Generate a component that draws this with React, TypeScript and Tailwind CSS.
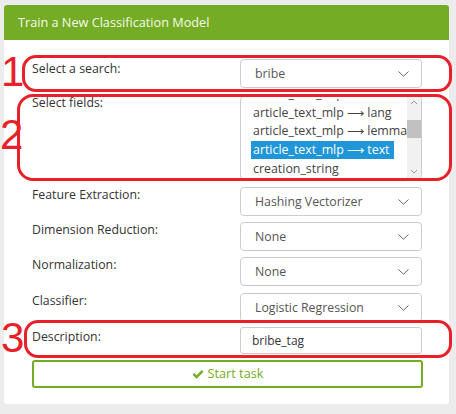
import React from "react";

const Chevron = () => (
  <svg width="11" height="6" viewBox="0 0 11 6" fill="none">
    <path d="M0.5 0.5 L5.5 5.2 L10.5 0.5" stroke="#666" strokeWidth="1" />
  </svg>
);

const Select = ({ value, className = "" }: { value: string; className?: string }) => (
  <div
    className={`w-[182px] h-[29px] border border-[#cccccc] rounded-[4px] bg-white flex items-center justify-between pl-[14px] pr-[12px] text-[12.3px] text-[#555] ${className}`}
  >
    <span className="mt-[1px]">{value}</span>
    <Chevron />
  </div>
);

const Row = ({ label, children, className = "", labelClass = "" }: { label: string; children: React.ReactNode; className?: string; labelClass?: string }) => (
  <div className={`flex ${className}`}>
    <div className={`w-[208px] text-[12.3px] leading-[16px] text-[#333] ${labelClass}`}>{label}</div>
    {children}
  </div>
);

const items = [
  "article_text_mlp ⟶ id",
  "article_text_mlp ⟶ lang",
  "article_text_mlp ⟶ lemmas",
  "article_text_mlp ⟶ text",
  "creation_string",
];

export default function App() {
  return (
    <div
      className="relative w-[456px] h-[414px] bg-[#ececec] pt-[5px] pl-[4px] overflow-hidden"
      style={{ fontFamily: '"Open Sans", "Noto Sans", sans-serif' }}
    >
      <div className="w-[445px] h-[399px] bg-white rounded-[3px]">
        <div className="h-[35px] bg-[#74ac25] rounded-t-[3px] flex items-center pl-[14px] text-[12.7px] text-[#f4fbea]">
          Train a New Classification Model
        </div>
        <div className="pl-[28px] pt-[19px]">
          <Row label="Select a search:" className="h-[29px] mb-[8px]" labelClass="pt-[2px]">
            <Select value="bribe" />
          </Row>
          <Row label="Select fields:" className="mb-[7px]" labelClass="-mt-[1px]">
            <div className="relative w-[182px] h-[84px] border border-[#cccccc] rounded-[4px] bg-white overflow-hidden">
              <div className="absolute left-0 top-[2px] right-[14px] bottom-0 overflow-hidden">
                <div className="mt-[-14px] pl-[12px] text-[12.4px] text-[#444] whitespace-nowrap">
                  {items.map((t, i) => (
                    <div key={t} className="h-[18.7px] leading-[18.7px]">
                      <span className={i === 3 ? "inline-block bg-[#1e96d8] text-white pr-[4px] pl-[2px] -ml-[2px] h-[18px]" : ""}>{t}</span>
                    </div>
                  ))}
                </div>
              </div>
              <div className="absolute right-0 top-0 bottom-0 w-[14px] bg-[#f1f1f1] flex flex-col items-center justify-between">
                <svg width="8" height="14" viewBox="0 0 8 14">
                  <path d="M1 7 L4 4 L7 7" stroke="#999" strokeWidth="1" fill="none" />
                </svg>
                <svg width="8" height="14" viewBox="0 0 8 14">
                  <path d="M1 5 L4 8 L7 5" stroke="#999" strokeWidth="1" fill="none" />
                </svg>
              </div>
              <div className="absolute right-0 top-[23px] w-[14px] h-[18px] bg-[#c1c1c1]" />
            </div>
          </Row>
          <Row label="Feature Extraction:" className="mb-[6px]">
            <Select value="Hashing Vectorizer" className="h-[28px]" />
          </Row>
          <Row label="Dimension Reduction:" className="mb-[6px]">
            <Select value="None" />
          </Row>
          <Row label="Normalization:" className="mb-[7px]">
            <Select value="None" className="h-[28px]" />
          </Row>
          <Row label="Classifier:" className="mb-[5px]">
            <Select value="Logistic Regression" className="h-[28px]" />
          </Row>
          <Row label="Description:" className="mb-[6px]" labelClass="pt-[2px]">
            <div className="w-[182px] h-[27px] border border-[#cccccc] rounded-[3px] bg-white flex items-center pl-[11px] text-[12px] text-[#333]">
              bribe_tag
            </div>
          </Row>
          <div className="w-[391px] h-[28px] border-2 border-[#74ac25] rounded-[3px] flex items-center justify-center text-[12.7px] text-[#74ac25] gap-[4px]">
            <svg width="12" height="11" viewBox="0 0 12 11">
              <path d="M0.5 5.8 L2.3 4 L4.6 6.3 L9.8 1 L11.6 2.8 L4.6 9.8 Z" fill="#74ac25" />
            </svg>
            <span>Start task</span>
          </div>
        </div>
      </div>

      {/* annotations */}
      <div className="absolute left-[22px] top-[55px] w-[430px] h-[37px] border-[3px] border-[#e8202a] rounded-[14px]" />
      <div className="absolute left-[17px] top-[94px] w-[435px] h-[87px] border-[3px] border-[#e8202a] rounded-[16px]" />
      <div className="absolute left-[24px] top-[320px] w-[428px] h-[38px] border-[3px] border-[#e8202a] rounded-[14px]" />
      <div className="absolute left-[1px] top-[49px] text-[42px] leading-[46px] text-[#e8202a]" style={{ fontFamily: '"Liberation Sans", Arial, sans-serif' }}>1</div>
      <div className="absolute left-[0px] top-[112px] text-[42px] leading-[46px] text-[#e8202a]" style={{ fontFamily: '"Liberation Sans", Arial, sans-serif' }}>2</div>
      <div className="absolute left-[1px] top-[315px] text-[42px] leading-[46px] text-[#e8202a]" style={{ fontFamily: '"Liberation Sans", Arial, sans-serif' }}>3</div>
    </div>
  );
}
